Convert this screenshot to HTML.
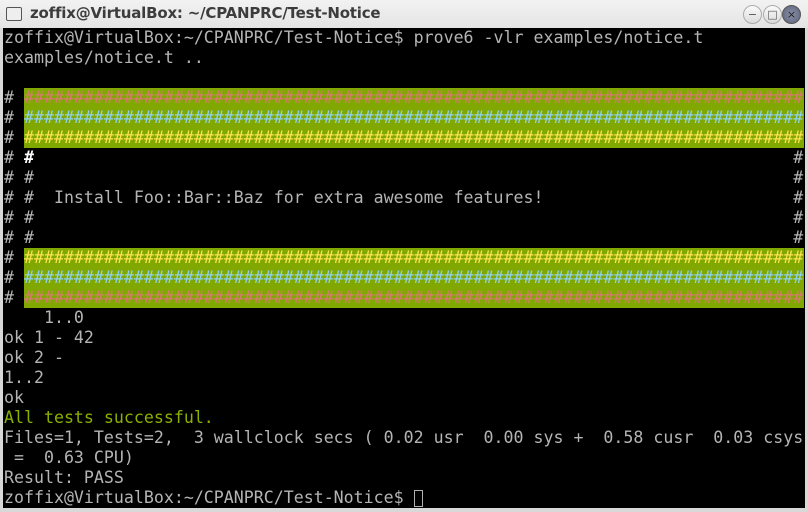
<!DOCTYPE html>
<html><head><meta charset="utf-8"><style>
html,body{margin:0;padding:0;}
body{width:808px;height:512px;background:#d8d8d8;position:relative;overflow:hidden;}
#tb{position:absolute;left:0;top:0;width:808px;height:28px;background:linear-gradient(#f2f2f2,#e4e4e4);}
#tb .t{position:absolute;left:30px;top:4px;font:bold 15px "DejaVu Sans","Liberation Sans",sans-serif;color:#3c3c3c;letter-spacing:-0.2px;}
#ic{position:absolute;left:6px;top:7px;width:14px;height:12px;border:1.5px solid #555;border-radius:2px;background:#eee;}
.btn{position:absolute;top:5px;width:17px;height:17px;border-radius:50%;border:1px solid #aaa;background:linear-gradient(#fafafa,#dcdcdc);font:11px "DejaVu Sans",sans-serif;color:#555;text-align:center;line-height:17px;}
#term{position:absolute;left:3px;top:28px;width:802px;height:480px;background:#000;}
.r{position:absolute;left:4px;height:20px;font:16.6px/20px "DejaVu Sans Mono","Liberation Mono",monospace;color:#b4b4b4;white-space:pre;}
.bar{position:absolute;left:24px;width:780px;height:20px;background:#80a800;}
.rd{color:#d57b70}.cy{color:#8fd1ee}.ye{color:#fde24f}
.g{color:#8ab000}
</style></head><body>
<div id="tb"><div id="ic"></div><div class="t">zoffix@VirtualBox: ~/CPANPRC/Test-Notice</div>
<div class="btn" style="left:743px">−</div><div class="btn" style="left:763px">□</div>
<div class="btn" style="left:782px;background:radial-gradient(#8a90a8,#5c627a);color:#222;border-color:#555">×</div></div>
<div id="term"></div>
<div class="bar" style="top:88px;height:60px"></div>
<div class="bar" style="top:248px;height:60px"></div>
<div class="r" style="top:28px">zoffix@VirtualBox:~/CPANPRC/Test-Notice$ prove6 -vlr examples/notice.t</div>
<div class="r" style="top:48px">examples/notice.t ..</div>
<div class="r" style="top:88px"># <span class="rd">##############################################################################</span></div>
<div class="r" style="top:108px"># <span class="cy">##############################################################################</span></div>
<div class="r" style="top:128px"># <span class="ye">##############################################################################</span></div>
<div class="r" style="top:148px"># <b style="color:#fff">#</b>                                                                            #</div>
<div class="r" style="top:168px"># #                                                                            #</div>
<div class="r" style="top:188px"># #  Install Foo::Bar::Baz for extra awesome features!                         #</div>
<div class="r" style="top:208px"># #                                                                            #</div>
<div class="r" style="top:228px"># #                                                                            #</div>
<div class="r" style="top:248px"># <span class="ye">##############################################################################</span></div>
<div class="r" style="top:268px"># <span class="cy">##############################################################################</span></div>
<div class="r" style="top:288px"># <span class="rd">##############################################################################</span></div>
<div class="r" style="top:308px">    1..0</div>
<div class="r" style="top:328px">ok 1 - 42</div>
<div class="r" style="top:348px">ok 2 -</div>
<div class="r" style="top:368px">1..2</div>
<div class="r" style="top:388px">ok</div>
<div class="r g" style="top:408px">All tests successful.</div>
<div class="r" style="top:428px">Files=1, Tests=2,  3 wallclock secs ( 0.02 usr  0.00 sys +  0.58 cusr  0.03 csys</div>
<div class="r" style="top:448px"> =  0.63 CPU)</div>
<div class="r" style="top:468px">Result: PASS</div>
<div class="r" style="top:488px">zoffix@VirtualBox:~/CPANPRC/Test-Notice$ <span style="display:inline-block;width:9px;height:17px;border:1px solid #b0b0b0;vertical-align:-4px;box-sizing:border-box"></span></div>
</body></html>
